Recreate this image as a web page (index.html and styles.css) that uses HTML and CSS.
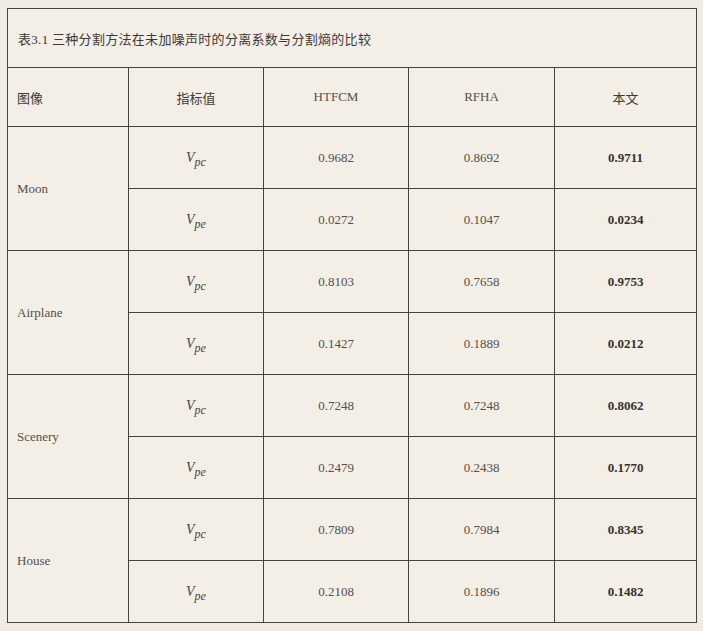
FILE: index.html
```html
<!DOCTYPE html>
<html lang="zh">
<head>
<meta charset="utf-8">
<title>表3.1</title>
<link rel="stylesheet" href="styles.css">
</head>
<body>
<table class="cmp">
  <colgroup>
    <col class="c1"><col class="c2"><col class="c3"><col class="c4"><col class="c5">
  </colgroup>
  <tr class="cap-row"><td colspan="5" class="cap">表3.1 三种分割方法在未加噪声时的分离系数与分割熵的比较</td></tr>
  <tr class="head-row">
    <td class="left cjk">图像</td>
    <td class="cjk">指标值</td>
    <td>HTFCM</td>
    <td>RFHA</td>
    <td class="cjk">本文</td>
  </tr>
  <tr><td rowspan="2" class="left">Moon</td><td><span class="v">V<sub>pc</sub></span></td><td>0.9682</td><td>0.8692</td><td class="b">0.9711</td></tr>
  <tr><td><span class="v">V<sub>pe</sub></span></td><td>0.0272</td><td>0.1047</td><td class="b">0.0234</td></tr>
  <tr><td rowspan="2" class="left">Airplane</td><td><span class="v">V<sub>pc</sub></span></td><td>0.8103</td><td>0.7658</td><td class="b">0.9753</td></tr>
  <tr><td><span class="v">V<sub>pe</sub></span></td><td>0.1427</td><td>0.1889</td><td class="b">0.0212</td></tr>
  <tr><td rowspan="2" class="left">Scenery</td><td><span class="v">V<sub>pc</sub></span></td><td>0.7248</td><td>0.7248</td><td class="b">0.8062</td></tr>
  <tr><td><span class="v">V<sub>pe</sub></span></td><td>0.2479</td><td>0.2438</td><td class="b">0.1770</td></tr>
  <tr><td rowspan="2" class="left">House</td><td><span class="v">V<sub>pc</sub></span></td><td>0.7809</td><td>0.7984</td><td class="b">0.8345</td></tr>
  <tr><td><span class="v">V<sub>pe</sub></span></td><td>0.2108</td><td>0.1896</td><td class="b">0.1482</td></tr>
</table>
</body>
</html>
```
FILE: styles.css
```css
html, body {
  margin: 0;
  background: #f1ece3;
}
body {
  padding: 8px 7px;
}
.cmp {
  border-collapse: collapse;
  table-layout: fixed;
  width: 689px;
  background: #f3eee6;
  font-family: "Liberation Serif", "Noto Sans CJK SC", serif;
  font-size: 13px;
  color: #555048;
}
.c1 { width: 121px; }
.c2 { width: 135px; }
.c3 { width: 145px; }
.c4 { width: 146px; }
.c5 { width: 142px; }
.cmp td {
  border: 1px solid #48423a;
  padding: 0 9px;
  text-align: center;
  vertical-align: middle;
  height: 61px;
}
.cmp .cap-row td, .cmp .head-row td {
  height: 58px;
}
.cmp td.cap {
  text-align: left;
  font-family: "Liberation Serif", "Noto Sans CJK SC", serif;
  font-size: 13px;
  color: #3e3a34;
  padding-left: 10px;
  letter-spacing: 0.3px;
}
.cmp td.left {
  text-align: left;
}
.cmp td.cjk {
  font-family: "Noto Sans CJK SC", sans-serif;
  color: #3e3a34;
}
.cmp td.b {
  font-weight: bold;
  color: #36322c;
}
.v {
  font-style: italic;
  font-size: 14px;
  color: #4a453e;
}
.v sub {
  font-size: 12px;
  vertical-align: -4px;
  line-height: 0;
}
```
